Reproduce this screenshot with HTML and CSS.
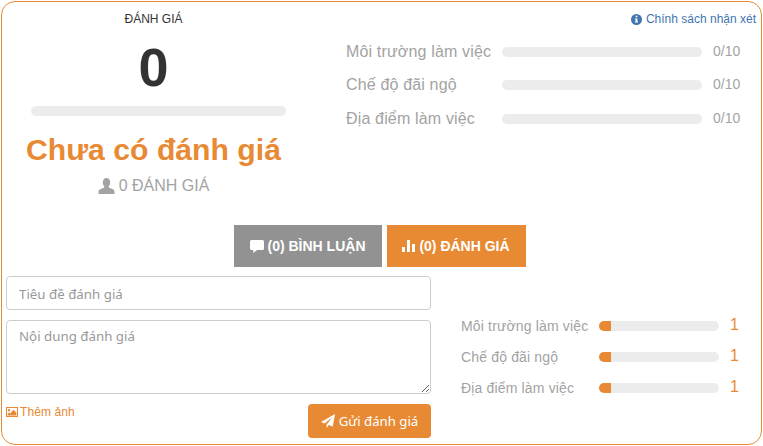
FILE: index.html
```html
<!DOCTYPE html>
<html lang="vi">
<head>
  <meta charset="UTF-8" />
  <title>Đánh giá</title>
  <link rel="stylesheet" href="styles.css">
</head>
<body>
  <div class="card">
    <div class="summary">
      <div class="score">
        <div class="score-title">ĐÁNH GIÁ</div>
        <div class="score-value">0</div>
        <div class="bar score-bar"></div>
        <div class="score-text">Chưa có đánh giá</div>
        <div class="score-count">
          <svg class="ic-user" viewBox="0 0 16 16"><path d="M0 16v-2.200c0-1.600 1-2.400 2.600-3l2.900-1.100c.3-.5.3-1 .1-1.500C4.800 7.200 4.300 5.900 4.300 4.300 4.300 1.700 5.700 0 8 0s3.700 1.700 3.700 4.300c0 1.600-.5 2.900-1.300 3.900-.2.500-.2 1 .1 1.500l2.900 1.100c1.600.6 2.600 1.400 2.600 3V16z"/></svg>
          0 ĐÁNH GIÁ
        </div>
      </div>
      <div class="criteria">
        <a class="policy" href="#">
          <svg class="ic-info" viewBox="0 0 12 12"><path fill-rule="evenodd" d="M6 0a6 6 0 1 1 0 12A6 6 0 0 1 6 0zM5 1.800v1.700h2V1.800zM4.300 4.800v1.100H5v2.400h-.7v1.100h3.400V8.300H7V4.800z"/></svg>
          Chính sách nhận xét
        </a>
        <div class="crit-row"><span class="crit-name">Môi trường làm việc</span><div class="bar crit-bar"></div><span class="crit-val">0/10</span></div>
        <div class="crit-row"><span class="crit-name">Chế độ đãi ngộ</span><div class="bar crit-bar"></div><span class="crit-val">0/10</span></div>
        <div class="crit-row"><span class="crit-name">Địa điểm làm việc</span><div class="bar crit-bar"></div><span class="crit-val">0/10</span></div>
      </div>
    </div>

    <div class="tabs">
      <button class="tab tab-gray">
        <svg class="ic-comment" viewBox="0 0 14 13"><path d="M1.500 0h11A1.500 1.500 0 0 1 14 1.500v7a1.500 1.500 0 0 1-1.500 1.500H7.200L3.300 13V10H1.500A1.500 1.500 0 0 1 0 8.500v-7A1.500 1.500 0 0 1 1.500 0z"/></svg>
        (0) BÌNH LUẬN
      </button>
      <button class="tab tab-orange">
        <svg class="ic-chart" viewBox="0 0 13 12"><path d="M0 7h3v5H0zM5 0h3v12H5zM10 4h3v8h-3z"/></svg>
        (0) ĐÁNH GIÁ
      </button>
    </div>

    <div class="bottom">
      <div class="review-form">
        <input class="field" type="text" placeholder="Tiêu đề đánh giá" />
        <textarea class="field area" placeholder="Nội dung đánh giá"></textarea>
        <div class="form-foot">
          <a class="add-photo" href="#">
            <svg class="ic-photo" viewBox="0 0 12 10"><path fill-rule="evenodd" d="M0 0h12v10H0zM1 1v8h10V1zM3 2a1.200 1.200 0 1 1 0 2.400A1.200 1.200 0 0 1 3 2zM1.600 8.400V6.800L3 5.500l1.100 1L7.500 2.800l2.900 2.900v2.700z"/></svg>
            Thêm ảnh
          </a>
          <button class="send">
            <svg class="ic-send" viewBox="0 0 14 14"><path d="M14 0L11.800 12.600 7.900 10.900 5.600 14V10.700L11.500 3 3.800 9.500 0 8z"/></svg>
            Gửi đánh giá
          </button>
        </div>
      </div>
      <div class="stats">
        <div class="stat-row"><span class="stat-name">Môi trường làm việc</span><div class="bar stat-bar"><div class="fill" style="width:10%"></div></div><span class="stat-val">1</span></div>
        <div class="stat-row"><span class="stat-name">Chế độ đãi ngộ</span><div class="bar stat-bar"><div class="fill" style="width:10%"></div></div><span class="stat-val">1</span></div>
        <div class="stat-row"><span class="stat-name">Địa điểm làm việc</span><div class="bar stat-bar"><div class="fill" style="width:10%"></div></div><span class="stat-val">1</span></div>
      </div>
    </div>
  </div>
</body>
</html>
```

FILE: styles.css
```css
:root {
  --orange: #e88a34;
  --gray: #a3a3a3;
  --track: #ececec;
}

* {
  box-sizing: border-box;
  margin: 0;
  padding: 0;
  font-family: "Liberation Sans", Arial, sans-serif;
}

body {
  background: white;
  height: 446px;
  overflow: hidden;
  padding: 1px;
}

.card {
  height: 444px;
  border: 1px solid var(--orange);
  border-radius: 14px;
  padding: 0 4px;
}

.bar {
  background: var(--track);
  border-radius: 5px;
  height: 10px;
  overflow: hidden;
}

.fill {
  background: var(--orange);
  height: 100%;
}

/* Phần trên */
.summary {
  display: flex;
  height: 223px;
}

.score {
  width: 295px;
  padding-top: 9px;
  display: flex;
  flex-direction: column;
  align-items: center;
}

.score-title {
  color: #333;
  font-size: 12px;
  line-height: 16px;
}

.score-value {
  color: #333;
  font-size: 54px;
  font-weight: 700;
  line-height: 62px;
  margin-top: 9px;
}

.score-bar {
  width: 255px;
  margin-top: 8px;
  margin-left: 10px;
}

.score-text {
  color: var(--orange);
  font-size: 30.2px;
  font-weight: 700;
  line-height: 36px;
  margin-top: 16px;
}

.score-count {
  color: var(--gray);
  font-size: 16px;
  line-height: 20px;
  margin-top: 8px;
  display: flex;
  align-items: center;
  gap: 4px;
}

.ic-user {
  width: 17px;
  height: 16px;
  fill: var(--gray);
}

.criteria {
  flex: 1;
  padding: 10px 1px 0 45px;
}

.policy {
  color: #3f76b0;
  font-size: 12px;
  line-height: 14px;
  text-decoration: none;
  display: flex;
  justify-content: flex-end;
  align-items: center;
  gap: 4px;
  margin-bottom: 9px;
}

.ic-info {
  width: 11px;
  height: 11px;
  fill: #3f76b0;
}

.crit-row {
  display: flex;
  align-items: center;
  height: 33.5px;
}

.crit-name {
  color: var(--gray);
  font-size: 16px;
  letter-spacing: 0.16px;
  width: 156px;
  white-space: nowrap;
}

.crit-bar {
  width: 200px;
}

.crit-val {
  color: var(--gray);
  font-size: 14px;
  margin-left: 11px;
  position: relative;
  top: -1px;
}

/* Tabs */
.tabs {
  display: flex;
  justify-content: center;
  gap: 5px;
  margin-left: -4px;
}

.tab {
  border: none;
  color: white;
  font-size: 14px;
  font-weight: 700;
  height: 42px;
  display: flex;
  align-items: center;
  justify-content: center;
  gap: 4px;
}

.tab-gray {
  background: #929292;
  width: 148px;
}

.tab-orange {
  background: var(--orange);
  width: 139px;
}

.ic-comment {
  width: 14px;
  height: 13px;
  fill: white;
}

.ic-chart {
  width: 13px;
  height: 12px;
  fill: white;
}

/* Form */
.bottom {
  display: flex;
  margin-top: 9px;
}

.review-form {
  width: 425px;
}

.field {
  display: block;
  width: 100%;
  height: 34px;
  border: 1px solid #ccc;
  border-radius: 4px;
  padding: 1px 12px 0;
  font-family: "Noto Sans", sans-serif;
  font-size: 13.3px;
  outline: none;
}

.field::placeholder {
  color: #999;
}

.area {
  height: 74px;
  margin-top: 10px;
  padding: 6px 12px;
}

.form-foot {
  display: flex;
  justify-content: space-between;
  margin-top: 10px;
}

.add-photo {
  color: var(--orange);
  font-size: 12px;
  letter-spacing: 0.1px;
  text-decoration: none;
  line-height: 16px;
  display: flex;
  align-items: center;
  gap: 2px;
  height: 16px;
}

.ic-photo {
  width: 12px;
  height: 10px;
  fill: var(--orange);
}

.send {
  background: var(--orange);
  border: none;
  border-radius: 4px;
  color: white;
  font-family: "Noto Sans", sans-serif;
  font-size: 13.2px;
  width: 123px;
  height: 34px;
  display: flex;
  align-items: center;
  justify-content: center;
  gap: 4px;
}

.ic-send {
  width: 14px;
  height: 14px;
  fill: white;
}

.stats {
  padding: 34px 0 0 30px;
}

.stat-row {
  display: flex;
  align-items: center;
  height: 31px;
}

.stat-name {
  color: var(--gray);
  font-size: 14px;
  letter-spacing: 0.16px;
  width: 138px;
  white-space: nowrap;
}

.stat-bar {
  width: 120px;
}

.stat-val {
  color: var(--orange);
  font-size: 16px;
  margin-left: 11px;
  position: relative;
  top: -1px;
}
```
